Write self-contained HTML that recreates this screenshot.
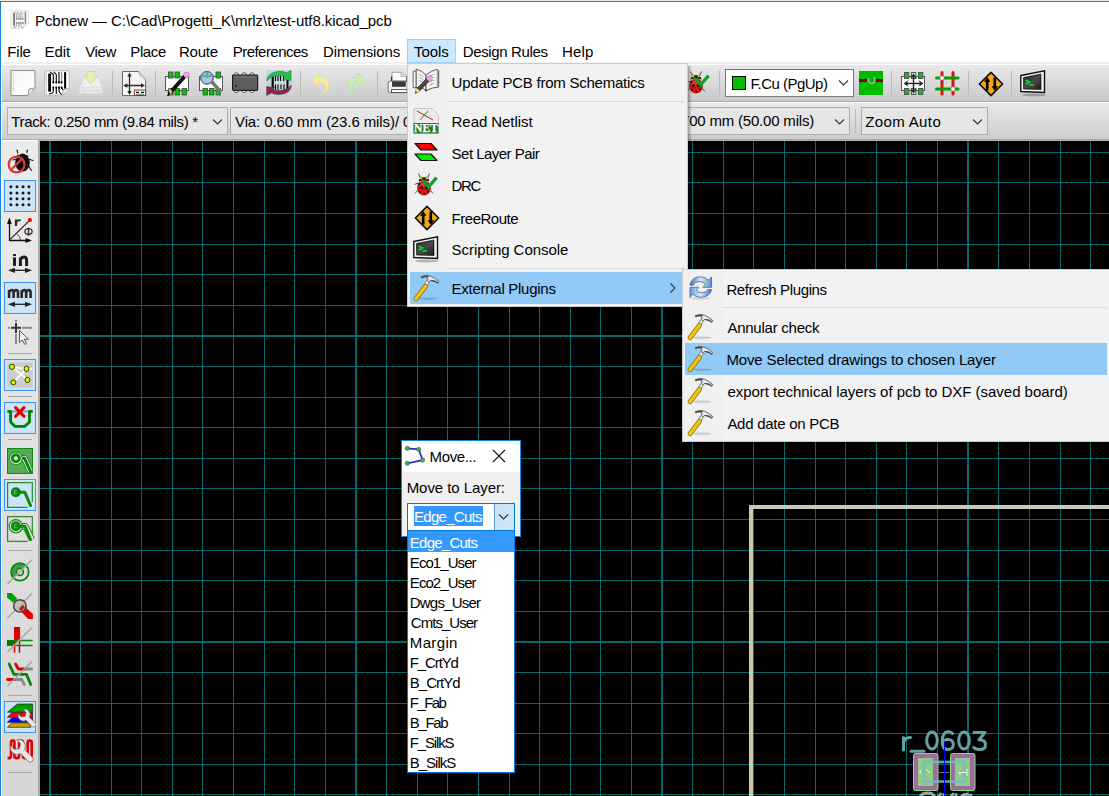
<!DOCTYPE html>
<html><head><meta charset="utf-8"><style>
html,body{margin:0;padding:0;}
body{width:1109px;height:796px;position:relative;overflow:hidden;background:#fff;font-family:"Liberation Sans", sans-serif;}
.t{position:absolute;white-space:pre;line-height:17px;font-family:"Liberation Sans", sans-serif;}
svg{display:block}
</style></head><body>
<svg style="position:absolute;left:0;top:0" width="1109" height="796" shape-rendering="crispEdges"><rect x="40" y="141" width="1069" height="655" fill="#000"/><rect x="49" y="141" width="2" height="655" fill="#006868"/><rect x="80" y="141" width="1" height="655" fill="#006868"/><rect x="111" y="141" width="1" height="655" fill="#006868"/><rect x="141" y="141" width="1" height="655" fill="#006868"/><rect x="172" y="141" width="1" height="655" fill="#006868"/><rect x="202" y="141" width="1" height="655" fill="#006868"/><rect x="233" y="141" width="1" height="655" fill="#006868"/><rect x="264" y="141" width="1" height="655" fill="#006868"/><rect x="294" y="141" width="1" height="655" fill="#006868"/><rect x="325" y="141" width="1" height="655" fill="#006868"/><rect x="355" y="141" width="2" height="655" fill="#006868"/><rect x="386" y="141" width="1" height="655" fill="#006868"/><rect x="417" y="141" width="1" height="655" fill="#006868"/><rect x="447" y="141" width="1" height="655" fill="#006868"/><rect x="478" y="141" width="1" height="655" fill="#006868"/><rect x="509" y="141" width="1" height="655" fill="#006868"/><rect x="539" y="141" width="1" height="655" fill="#006868"/><rect x="570" y="141" width="1" height="655" fill="#006868"/><rect x="600" y="141" width="1" height="655" fill="#006868"/><rect x="631" y="141" width="1" height="655" fill="#006868"/><rect x="661" y="141" width="2" height="655" fill="#006868"/><rect x="692" y="141" width="1" height="655" fill="#006868"/><rect x="723" y="141" width="1" height="655" fill="#006868"/><rect x="753" y="141" width="1" height="655" fill="#006868"/><rect x="784" y="141" width="1" height="655" fill="#006868"/><rect x="815" y="141" width="1" height="655" fill="#006868"/><rect x="845" y="141" width="1" height="655" fill="#006868"/><rect x="876" y="141" width="1" height="655" fill="#006868"/><rect x="906" y="141" width="1" height="655" fill="#006868"/><rect x="937" y="141" width="1" height="655" fill="#006868"/><rect x="967" y="141" width="2" height="655" fill="#006868"/><rect x="998" y="141" width="1" height="655" fill="#006868"/><rect x="1029" y="141" width="1" height="655" fill="#006868"/><rect x="1060" y="141" width="1" height="655" fill="#006868"/><rect x="1090" y="141" width="1" height="655" fill="#006868"/><rect x="40" y="152" width="1069" height="1" fill="#006868"/><rect x="40" y="182" width="1069" height="1" fill="#006868"/><rect x="40" y="213" width="1069" height="1" fill="#006868"/><rect x="40" y="244" width="1069" height="1" fill="#006868"/><rect x="40" y="274" width="1069" height="1" fill="#006868"/><rect x="40" y="305" width="1069" height="1" fill="#006868"/><rect x="40" y="335" width="1069" height="2" fill="#006868"/><rect x="40" y="366" width="1069" height="1" fill="#006868"/><rect x="40" y="397" width="1069" height="1" fill="#006868"/><rect x="40" y="427" width="1069" height="1" fill="#006868"/><rect x="40" y="458" width="1069" height="1" fill="#006868"/><rect x="40" y="488" width="1069" height="1" fill="#006868"/><rect x="40" y="519" width="1069" height="1" fill="#006868"/><rect x="40" y="550" width="1069" height="1" fill="#006868"/><rect x="40" y="580" width="1069" height="1" fill="#006868"/><rect x="40" y="611" width="1069" height="1" fill="#006868"/><rect x="40" y="641" width="1069" height="2" fill="#006868"/><rect x="40" y="672" width="1069" height="1" fill="#006868"/><rect x="40" y="703" width="1069" height="1" fill="#006868"/><rect x="40" y="733" width="1069" height="1" fill="#006868"/><rect x="40" y="764" width="1069" height="1" fill="#006868"/><rect x="40" y="794" width="1069" height="1" fill="#006868"/><path d="M49 152h2v1h-2zM49 182h2v1h-2zM49 213h2v1h-2zM49 244h2v1h-2zM49 274h2v1h-2zM49 305h2v1h-2zM49 335h2v2h-2zM49 366h2v1h-2zM49 397h2v1h-2zM49 427h2v1h-2zM49 458h2v1h-2zM49 488h2v1h-2zM49 519h2v1h-2zM49 550h2v1h-2zM49 580h2v1h-2zM49 611h2v1h-2zM49 641h2v2h-2zM49 672h2v1h-2zM49 703h2v1h-2zM49 733h2v1h-2zM49 764h2v1h-2zM49 794h2v1h-2zM80 152h1v1h-1zM80 182h1v1h-1zM80 213h1v1h-1zM80 244h1v1h-1zM80 274h1v1h-1zM80 305h1v1h-1zM80 335h1v2h-1zM80 366h1v1h-1zM80 397h1v1h-1zM80 427h1v1h-1zM80 458h1v1h-1zM80 488h1v1h-1zM80 519h1v1h-1zM80 550h1v1h-1zM80 580h1v1h-1zM80 611h1v1h-1zM80 641h1v2h-1zM80 672h1v1h-1zM80 703h1v1h-1zM80 733h1v1h-1zM80 764h1v1h-1zM80 794h1v1h-1zM111 152h1v1h-1zM111 182h1v1h-1zM111 213h1v1h-1zM111 244h1v1h-1zM111 274h1v1h-1zM111 305h1v1h-1zM111 335h1v2h-1zM111 366h1v1h-1zM111 397h1v1h-1zM111 427h1v1h-1zM111 458h1v1h-1zM111 488h1v1h-1zM111 519h1v1h-1zM111 550h1v1h-1zM111 580h1v1h-1zM111 611h1v1h-1zM111 641h1v2h-1zM111 672h1v1h-1zM111 703h1v1h-1zM111 733h1v1h-1zM111 764h1v1h-1zM111 794h1v1h-1zM141 152h1v1h-1zM141 182h1v1h-1zM141 213h1v1h-1zM141 244h1v1h-1zM141 274h1v1h-1zM141 305h1v1h-1zM141 335h1v2h-1zM141 366h1v1h-1zM141 397h1v1h-1zM141 427h1v1h-1zM141 458h1v1h-1zM141 488h1v1h-1zM141 519h1v1h-1zM141 550h1v1h-1zM141 580h1v1h-1zM141 611h1v1h-1zM141 641h1v2h-1zM141 672h1v1h-1zM141 703h1v1h-1zM141 733h1v1h-1zM141 764h1v1h-1zM141 794h1v1h-1zM172 152h1v1h-1zM172 182h1v1h-1zM172 213h1v1h-1zM172 244h1v1h-1zM172 274h1v1h-1zM172 305h1v1h-1zM172 335h1v2h-1zM172 366h1v1h-1zM172 397h1v1h-1zM172 427h1v1h-1zM172 458h1v1h-1zM172 488h1v1h-1zM172 519h1v1h-1zM172 550h1v1h-1zM172 580h1v1h-1zM172 611h1v1h-1zM172 641h1v2h-1zM172 672h1v1h-1zM172 703h1v1h-1zM172 733h1v1h-1zM172 764h1v1h-1zM172 794h1v1h-1zM202 152h1v1h-1zM202 182h1v1h-1zM202 213h1v1h-1zM202 244h1v1h-1zM202 274h1v1h-1zM202 305h1v1h-1zM202 335h1v2h-1zM202 366h1v1h-1zM202 397h1v1h-1zM202 427h1v1h-1zM202 458h1v1h-1zM202 488h1v1h-1zM202 519h1v1h-1zM202 550h1v1h-1zM202 580h1v1h-1zM202 611h1v1h-1zM202 641h1v2h-1zM202 672h1v1h-1zM202 703h1v1h-1zM202 733h1v1h-1zM202 764h1v1h-1zM202 794h1v1h-1zM233 152h1v1h-1zM233 182h1v1h-1zM233 213h1v1h-1zM233 244h1v1h-1zM233 274h1v1h-1zM233 305h1v1h-1zM233 335h1v2h-1zM233 366h1v1h-1zM233 397h1v1h-1zM233 427h1v1h-1zM233 458h1v1h-1zM233 488h1v1h-1zM233 519h1v1h-1zM233 550h1v1h-1zM233 580h1v1h-1zM233 611h1v1h-1zM233 641h1v2h-1zM233 672h1v1h-1zM233 703h1v1h-1zM233 733h1v1h-1zM233 764h1v1h-1zM233 794h1v1h-1zM264 152h1v1h-1zM264 182h1v1h-1zM264 213h1v1h-1zM264 244h1v1h-1zM264 274h1v1h-1zM264 305h1v1h-1zM264 335h1v2h-1zM264 366h1v1h-1zM264 397h1v1h-1zM264 427h1v1h-1zM264 458h1v1h-1zM264 488h1v1h-1zM264 519h1v1h-1zM264 550h1v1h-1zM264 580h1v1h-1zM264 611h1v1h-1zM264 641h1v2h-1zM264 672h1v1h-1zM264 703h1v1h-1zM264 733h1v1h-1zM264 764h1v1h-1zM264 794h1v1h-1zM294 152h1v1h-1zM294 182h1v1h-1zM294 213h1v1h-1zM294 244h1v1h-1zM294 274h1v1h-1zM294 305h1v1h-1zM294 335h1v2h-1zM294 366h1v1h-1zM294 397h1v1h-1zM294 427h1v1h-1zM294 458h1v1h-1zM294 488h1v1h-1zM294 519h1v1h-1zM294 550h1v1h-1zM294 580h1v1h-1zM294 611h1v1h-1zM294 641h1v2h-1zM294 672h1v1h-1zM294 703h1v1h-1zM294 733h1v1h-1zM294 764h1v1h-1zM294 794h1v1h-1zM325 152h1v1h-1zM325 182h1v1h-1zM325 213h1v1h-1zM325 244h1v1h-1zM325 274h1v1h-1zM325 305h1v1h-1zM325 335h1v2h-1zM325 366h1v1h-1zM325 397h1v1h-1zM325 427h1v1h-1zM325 458h1v1h-1zM325 488h1v1h-1zM325 519h1v1h-1zM325 550h1v1h-1zM325 580h1v1h-1zM325 611h1v1h-1zM325 641h1v2h-1zM325 672h1v1h-1zM325 703h1v1h-1zM325 733h1v1h-1zM325 764h1v1h-1zM325 794h1v1h-1zM355 152h2v1h-2zM355 182h2v1h-2zM355 213h2v1h-2zM355 244h2v1h-2zM355 274h2v1h-2zM355 305h2v1h-2zM355 335h2v2h-2zM355 366h2v1h-2zM355 397h2v1h-2zM355 427h2v1h-2zM355 458h2v1h-2zM355 488h2v1h-2zM355 519h2v1h-2zM355 550h2v1h-2zM355 580h2v1h-2zM355 611h2v1h-2zM355 641h2v2h-2zM355 672h2v1h-2zM355 703h2v1h-2zM355 733h2v1h-2zM355 764h2v1h-2zM355 794h2v1h-2zM386 152h1v1h-1zM386 182h1v1h-1zM386 213h1v1h-1zM386 244h1v1h-1zM386 274h1v1h-1zM386 305h1v1h-1zM386 335h1v2h-1zM386 366h1v1h-1zM386 397h1v1h-1zM386 427h1v1h-1zM386 458h1v1h-1zM386 488h1v1h-1zM386 519h1v1h-1zM386 550h1v1h-1zM386 580h1v1h-1zM386 611h1v1h-1zM386 641h1v2h-1zM386 672h1v1h-1zM386 703h1v1h-1zM386 733h1v1h-1zM386 764h1v1h-1zM386 794h1v1h-1zM417 152h1v1h-1zM417 182h1v1h-1zM417 213h1v1h-1zM417 244h1v1h-1zM417 274h1v1h-1zM417 305h1v1h-1zM417 335h1v2h-1zM417 366h1v1h-1zM417 397h1v1h-1zM417 427h1v1h-1zM417 458h1v1h-1zM417 488h1v1h-1zM417 519h1v1h-1zM417 550h1v1h-1zM417 580h1v1h-1zM417 611h1v1h-1zM417 641h1v2h-1zM417 672h1v1h-1zM417 703h1v1h-1zM417 733h1v1h-1zM417 764h1v1h-1zM417 794h1v1h-1zM447 152h1v1h-1zM447 182h1v1h-1zM447 213h1v1h-1zM447 244h1v1h-1zM447 274h1v1h-1zM447 305h1v1h-1zM447 335h1v2h-1zM447 366h1v1h-1zM447 397h1v1h-1zM447 427h1v1h-1zM447 458h1v1h-1zM447 488h1v1h-1zM447 519h1v1h-1zM447 550h1v1h-1zM447 580h1v1h-1zM447 611h1v1h-1zM447 641h1v2h-1zM447 672h1v1h-1zM447 703h1v1h-1zM447 733h1v1h-1zM447 764h1v1h-1zM447 794h1v1h-1zM478 152h1v1h-1zM478 182h1v1h-1zM478 213h1v1h-1zM478 244h1v1h-1zM478 274h1v1h-1zM478 305h1v1h-1zM478 335h1v2h-1zM478 366h1v1h-1zM478 397h1v1h-1zM478 427h1v1h-1zM478 458h1v1h-1zM478 488h1v1h-1zM478 519h1v1h-1zM478 550h1v1h-1zM478 580h1v1h-1zM478 611h1v1h-1zM478 641h1v2h-1zM478 672h1v1h-1zM478 703h1v1h-1zM478 733h1v1h-1zM478 764h1v1h-1zM478 794h1v1h-1zM509 152h1v1h-1zM509 182h1v1h-1zM509 213h1v1h-1zM509 244h1v1h-1zM509 274h1v1h-1zM509 305h1v1h-1zM509 335h1v2h-1zM509 366h1v1h-1zM509 397h1v1h-1zM509 427h1v1h-1zM509 458h1v1h-1zM509 488h1v1h-1zM509 519h1v1h-1zM509 550h1v1h-1zM509 580h1v1h-1zM509 611h1v1h-1zM509 641h1v2h-1zM509 672h1v1h-1zM509 703h1v1h-1zM509 733h1v1h-1zM509 764h1v1h-1zM509 794h1v1h-1zM539 152h1v1h-1zM539 182h1v1h-1zM539 213h1v1h-1zM539 244h1v1h-1zM539 274h1v1h-1zM539 305h1v1h-1zM539 335h1v2h-1zM539 366h1v1h-1zM539 397h1v1h-1zM539 427h1v1h-1zM539 458h1v1h-1zM539 488h1v1h-1zM539 519h1v1h-1zM539 550h1v1h-1zM539 580h1v1h-1zM539 611h1v1h-1zM539 641h1v2h-1zM539 672h1v1h-1zM539 703h1v1h-1zM539 733h1v1h-1zM539 764h1v1h-1zM539 794h1v1h-1zM570 152h1v1h-1zM570 182h1v1h-1zM570 213h1v1h-1zM570 244h1v1h-1zM570 274h1v1h-1zM570 305h1v1h-1zM570 335h1v2h-1zM570 366h1v1h-1zM570 397h1v1h-1zM570 427h1v1h-1zM570 458h1v1h-1zM570 488h1v1h-1zM570 519h1v1h-1zM570 550h1v1h-1zM570 580h1v1h-1zM570 611h1v1h-1zM570 641h1v2h-1zM570 672h1v1h-1zM570 703h1v1h-1zM570 733h1v1h-1zM570 764h1v1h-1zM570 794h1v1h-1zM600 152h1v1h-1zM600 182h1v1h-1zM600 213h1v1h-1zM600 244h1v1h-1zM600 274h1v1h-1zM600 305h1v1h-1zM600 335h1v2h-1zM600 366h1v1h-1zM600 397h1v1h-1zM600 427h1v1h-1zM600 458h1v1h-1zM600 488h1v1h-1zM600 519h1v1h-1zM600 550h1v1h-1zM600 580h1v1h-1zM600 611h1v1h-1zM600 641h1v2h-1zM600 672h1v1h-1zM600 703h1v1h-1zM600 733h1v1h-1zM600 764h1v1h-1zM600 794h1v1h-1zM631 152h1v1h-1zM631 182h1v1h-1zM631 213h1v1h-1zM631 244h1v1h-1zM631 274h1v1h-1zM631 305h1v1h-1zM631 335h1v2h-1zM631 366h1v1h-1zM631 397h1v1h-1zM631 427h1v1h-1zM631 458h1v1h-1zM631 488h1v1h-1zM631 519h1v1h-1zM631 550h1v1h-1zM631 580h1v1h-1zM631 611h1v1h-1zM631 641h1v2h-1zM631 672h1v1h-1zM631 703h1v1h-1zM631 733h1v1h-1zM631 764h1v1h-1zM631 794h1v1h-1zM661 152h2v1h-2zM661 182h2v1h-2zM661 213h2v1h-2zM661 244h2v1h-2zM661 274h2v1h-2zM661 305h2v1h-2zM661 335h2v2h-2zM661 366h2v1h-2zM661 397h2v1h-2zM661 427h2v1h-2zM661 458h2v1h-2zM661 488h2v1h-2zM661 519h2v1h-2zM661 550h2v1h-2zM661 580h2v1h-2zM661 611h2v1h-2zM661 641h2v2h-2zM661 672h2v1h-2zM661 703h2v1h-2zM661 733h2v1h-2zM661 764h2v1h-2zM661 794h2v1h-2zM692 152h1v1h-1zM692 182h1v1h-1zM692 213h1v1h-1zM692 244h1v1h-1zM692 274h1v1h-1zM692 305h1v1h-1zM692 335h1v2h-1zM692 366h1v1h-1zM692 397h1v1h-1zM692 427h1v1h-1zM692 458h1v1h-1zM692 488h1v1h-1zM692 519h1v1h-1zM692 550h1v1h-1zM692 580h1v1h-1zM692 611h1v1h-1zM692 641h1v2h-1zM692 672h1v1h-1zM692 703h1v1h-1zM692 733h1v1h-1zM692 764h1v1h-1zM692 794h1v1h-1zM723 152h1v1h-1zM723 182h1v1h-1zM723 213h1v1h-1zM723 244h1v1h-1zM723 274h1v1h-1zM723 305h1v1h-1zM723 335h1v2h-1zM723 366h1v1h-1zM723 397h1v1h-1zM723 427h1v1h-1zM723 458h1v1h-1zM723 488h1v1h-1zM723 519h1v1h-1zM723 550h1v1h-1zM723 580h1v1h-1zM723 611h1v1h-1zM723 641h1v2h-1zM723 672h1v1h-1zM723 703h1v1h-1zM723 733h1v1h-1zM723 764h1v1h-1zM723 794h1v1h-1zM753 152h1v1h-1zM753 182h1v1h-1zM753 213h1v1h-1zM753 244h1v1h-1zM753 274h1v1h-1zM753 305h1v1h-1zM753 335h1v2h-1zM753 366h1v1h-1zM753 397h1v1h-1zM753 427h1v1h-1zM753 458h1v1h-1zM753 488h1v1h-1zM753 519h1v1h-1zM753 550h1v1h-1zM753 580h1v1h-1zM753 611h1v1h-1zM753 641h1v2h-1zM753 672h1v1h-1zM753 703h1v1h-1zM753 733h1v1h-1zM753 764h1v1h-1zM753 794h1v1h-1zM784 152h1v1h-1zM784 182h1v1h-1zM784 213h1v1h-1zM784 244h1v1h-1zM784 274h1v1h-1zM784 305h1v1h-1zM784 335h1v2h-1zM784 366h1v1h-1zM784 397h1v1h-1zM784 427h1v1h-1zM784 458h1v1h-1zM784 488h1v1h-1zM784 519h1v1h-1zM784 550h1v1h-1zM784 580h1v1h-1zM784 611h1v1h-1zM784 641h1v2h-1zM784 672h1v1h-1zM784 703h1v1h-1zM784 733h1v1h-1zM784 764h1v1h-1zM784 794h1v1h-1zM815 152h1v1h-1zM815 182h1v1h-1zM815 213h1v1h-1zM815 244h1v1h-1zM815 274h1v1h-1zM815 305h1v1h-1zM815 335h1v2h-1zM815 366h1v1h-1zM815 397h1v1h-1zM815 427h1v1h-1zM815 458h1v1h-1zM815 488h1v1h-1zM815 519h1v1h-1zM815 550h1v1h-1zM815 580h1v1h-1zM815 611h1v1h-1zM815 641h1v2h-1zM815 672h1v1h-1zM815 703h1v1h-1zM815 733h1v1h-1zM815 764h1v1h-1zM815 794h1v1h-1zM845 152h1v1h-1zM845 182h1v1h-1zM845 213h1v1h-1zM845 244h1v1h-1zM845 274h1v1h-1zM845 305h1v1h-1zM845 335h1v2h-1zM845 366h1v1h-1zM845 397h1v1h-1zM845 427h1v1h-1zM845 458h1v1h-1zM845 488h1v1h-1zM845 519h1v1h-1zM845 550h1v1h-1zM845 580h1v1h-1zM845 611h1v1h-1zM845 641h1v2h-1zM845 672h1v1h-1zM845 703h1v1h-1zM845 733h1v1h-1zM845 764h1v1h-1zM845 794h1v1h-1zM876 152h1v1h-1zM876 182h1v1h-1zM876 213h1v1h-1zM876 244h1v1h-1zM876 274h1v1h-1zM876 305h1v1h-1zM876 335h1v2h-1zM876 366h1v1h-1zM876 397h1v1h-1zM876 427h1v1h-1zM876 458h1v1h-1zM876 488h1v1h-1zM876 519h1v1h-1zM876 550h1v1h-1zM876 580h1v1h-1zM876 611h1v1h-1zM876 641h1v2h-1zM876 672h1v1h-1zM876 703h1v1h-1zM876 733h1v1h-1zM876 764h1v1h-1zM876 794h1v1h-1zM906 152h1v1h-1zM906 182h1v1h-1zM906 213h1v1h-1zM906 244h1v1h-1zM906 274h1v1h-1zM906 305h1v1h-1zM906 335h1v2h-1zM906 366h1v1h-1zM906 397h1v1h-1zM906 427h1v1h-1zM906 458h1v1h-1zM906 488h1v1h-1zM906 519h1v1h-1zM906 550h1v1h-1zM906 580h1v1h-1zM906 611h1v1h-1zM906 641h1v2h-1zM906 672h1v1h-1zM906 703h1v1h-1zM906 733h1v1h-1zM906 764h1v1h-1zM906 794h1v1h-1zM937 152h1v1h-1zM937 182h1v1h-1zM937 213h1v1h-1zM937 244h1v1h-1zM937 274h1v1h-1zM937 305h1v1h-1zM937 335h1v2h-1zM937 366h1v1h-1zM937 397h1v1h-1zM937 427h1v1h-1zM937 458h1v1h-1zM937 488h1v1h-1zM937 519h1v1h-1zM937 550h1v1h-1zM937 580h1v1h-1zM937 611h1v1h-1zM937 641h1v2h-1zM937 672h1v1h-1zM937 703h1v1h-1zM937 733h1v1h-1zM937 764h1v1h-1zM937 794h1v1h-1zM967 152h2v1h-2zM967 182h2v1h-2zM967 213h2v1h-2zM967 244h2v1h-2zM967 274h2v1h-2zM967 305h2v1h-2zM967 335h2v2h-2zM967 366h2v1h-2zM967 397h2v1h-2zM967 427h2v1h-2zM967 458h2v1h-2zM967 488h2v1h-2zM967 519h2v1h-2zM967 550h2v1h-2zM967 580h2v1h-2zM967 611h2v1h-2zM967 641h2v2h-2zM967 672h2v1h-2zM967 703h2v1h-2zM967 733h2v1h-2zM967 764h2v1h-2zM967 794h2v1h-2zM998 152h1v1h-1zM998 182h1v1h-1zM998 213h1v1h-1zM998 244h1v1h-1zM998 274h1v1h-1zM998 305h1v1h-1zM998 335h1v2h-1zM998 366h1v1h-1zM998 397h1v1h-1zM998 427h1v1h-1zM998 458h1v1h-1zM998 488h1v1h-1zM998 519h1v1h-1zM998 550h1v1h-1zM998 580h1v1h-1zM998 611h1v1h-1zM998 641h1v2h-1zM998 672h1v1h-1zM998 703h1v1h-1zM998 733h1v1h-1zM998 764h1v1h-1zM998 794h1v1h-1zM1029 152h1v1h-1zM1029 182h1v1h-1zM1029 213h1v1h-1zM1029 244h1v1h-1zM1029 274h1v1h-1zM1029 305h1v1h-1zM1029 335h1v2h-1zM1029 366h1v1h-1zM1029 397h1v1h-1zM1029 427h1v1h-1zM1029 458h1v1h-1zM1029 488h1v1h-1zM1029 519h1v1h-1zM1029 550h1v1h-1zM1029 580h1v1h-1zM1029 611h1v1h-1zM1029 641h1v2h-1zM1029 672h1v1h-1zM1029 703h1v1h-1zM1029 733h1v1h-1zM1029 764h1v1h-1zM1029 794h1v1h-1zM1060 152h1v1h-1zM1060 182h1v1h-1zM1060 213h1v1h-1zM1060 244h1v1h-1zM1060 274h1v1h-1zM1060 305h1v1h-1zM1060 335h1v2h-1zM1060 366h1v1h-1zM1060 397h1v1h-1zM1060 427h1v1h-1zM1060 458h1v1h-1zM1060 488h1v1h-1zM1060 519h1v1h-1zM1060 550h1v1h-1zM1060 580h1v1h-1zM1060 611h1v1h-1zM1060 641h1v2h-1zM1060 672h1v1h-1zM1060 703h1v1h-1zM1060 733h1v1h-1zM1060 764h1v1h-1zM1060 794h1v1h-1zM1090 152h1v1h-1zM1090 182h1v1h-1zM1090 213h1v1h-1zM1090 244h1v1h-1zM1090 274h1v1h-1zM1090 305h1v1h-1zM1090 335h1v2h-1zM1090 366h1v1h-1zM1090 397h1v1h-1zM1090 427h1v1h-1zM1090 458h1v1h-1zM1090 488h1v1h-1zM1090 519h1v1h-1zM1090 550h1v1h-1zM1090 580h1v1h-1zM1090 611h1v1h-1zM1090 641h1v2h-1zM1090 672h1v1h-1zM1090 703h1v1h-1zM1090 733h1v1h-1zM1090 764h1v1h-1zM1090 794h1v1h-1z" fill="#007676"/></svg>
<div style="position:absolute;left:0px;top:0px;width:1109px;height:1px;background:#efe6dc"></div>
<div style="position:absolute;left:0px;top:1px;width:1109px;height:1px;background:#1a7fd6"></div>
<div style="position:absolute;left:0px;top:1px;width:1px;height:795px;background:#1a7fd6"></div>
<div style="position:absolute;left:1px;top:2px;width:1108px;height:60px;background:#fff"></div>
<div style="position:absolute;left:1px;top:62px;width:1108px;height:2px;background:#f0f0f0"></div>
<div style="position:absolute;left:1px;top:64px;width:1108px;height:1px;background:#fdfdfd"></div>
<div style="position:absolute;left:1px;top:65px;width:1108px;height:36px;background:linear-gradient(#e9e9e9,#cacaca)"></div>
<div style="position:absolute;left:1px;top:101px;width:1108px;height:1px;background:#a9a9a9"></div>
<div style="position:absolute;left:1px;top:102px;width:1108px;height:1px;background:#fff"></div>
<div style="position:absolute;left:1px;top:103px;width:1108px;height:36px;background:linear-gradient(#e9e9e9,#cdcdcd)"></div>
<div style="position:absolute;left:1px;top:139px;width:1108px;height:1px;background:#a9a9a9"></div>
<div style="position:absolute;left:38px;top:140px;width:1071px;height:1px;background:#b4b4b4"></div>
<div style="position:absolute;left:1px;top:140px;width:37px;height:1px;background:#fff"></div>
<div style="position:absolute;left:1px;top:62px;width:1px;height:734px;background:#fbfbfb"></div>
<div style="position:absolute;left:2px;top:141px;width:36px;height:655px;background:linear-gradient(#ebebeb,#d6d6d6)"></div>
<div style="position:absolute;left:38px;top:140px;width:2px;height:656px;background:#ababab"></div>
<div class="t" style="left:35.0px;top:12.3px;font-size:15px;color:#000;letter-spacing:-0.066px;">Pcbnew — C:\Cad\Progetti_K\mrlz\test-utf8.kicad_pcb</div>
<div style="position:absolute;left:407px;top:39px;width:49px;height:24px;background:#cce8ff;box-sizing:border-box;border:1px solid #99d1ff"></div>
<div class="t" style="left:7.3px;top:43.3px;font-size:15px;color:#000;letter-spacing:-0.167px;">File</div>
<div class="t" style="left:44.6px;top:43.3px;font-size:15px;color:#000;letter-spacing:-0.067px;">Edit</div>
<div class="t" style="left:85.3px;top:43.3px;font-size:15px;color:#000;letter-spacing:-0.433px;">View</div>
<div class="t" style="left:130.3px;top:43.3px;font-size:15px;color:#000;letter-spacing:-0.400px;">Place</div>
<div class="t" style="left:179.0px;top:43.3px;font-size:15px;color:#000;letter-spacing:-0.250px;">Route</div>
<div class="t" style="left:232.7px;top:43.3px;font-size:15px;color:#000;letter-spacing:-0.530px;">Preferences</div>
<div class="t" style="left:323.0px;top:43.3px;font-size:15px;color:#000;letter-spacing:-0.133px;">Dimensions</div>
<div class="t" style="left:414.0px;top:43.3px;font-size:15px;color:#000;letter-spacing:-0.050px;">Tools</div>
<div class="t" style="left:462.7px;top:43.3px;font-size:15px;color:#000;letter-spacing:-0.355px;">Design Rules</div>
<div class="t" style="left:562.0px;top:43.3px;font-size:15px;color:#000;letter-spacing:0.200px;">Help</div>
<div style="position:absolute;left:112px;top:71px;width:1px;height:24px;background:#b9b9b9"></div>
<div style="position:absolute;left:155px;top:71px;width:1px;height:24px;background:#b9b9b9"></div>
<div style="position:absolute;left:300px;top:71px;width:1px;height:24px;background:#b9b9b9"></div>
<div style="position:absolute;left:377px;top:71px;width:1px;height:24px;background:#b9b9b9"></div>
<div style="position:absolute;left:719px;top:71px;width:1px;height:24px;background:#b9b9b9"></div>
<div style="position:absolute;left:891px;top:71px;width:1px;height:24px;background:#b9b9b9"></div>
<div style="position:absolute;left:968px;top:71px;width:1px;height:24px;background:#b9b9b9"></div>
<div style="position:absolute;left:1011px;top:71px;width:1px;height:24px;background:#b9b9b9"></div>
<div style="position:absolute;left:725px;top:69px;width:129px;height:28px;background:#fff;box-sizing:border-box;border:1px solid #7a7a7a"></div>
<div style="position:absolute;left:732px;top:76px;width:14px;height:14px;background:#00c000;box-sizing:border-box;border:1px solid #000"></div>
<div class="t" style="left:750.6px;top:74.6px;font-size:15px;color:#000;letter-spacing:-0.520px;">F.Cu (PgUp)</div>
<svg style="position:absolute;left:838px;top:79px" width="12" height="8"><path d="M1 1.5 L5.5 6 L10 1.5" fill="none" stroke="#333" stroke-width="1.1"/></svg>
<div style="position:absolute;left:7px;top:107px;width:221px;height:28px;background:#e5e5e5;box-sizing:border-box;border:1px solid #adadad"></div>
<div class="t" style="left:11.2px;top:112.7px;font-size:15px;color:#000;letter-spacing:-0.329px;">Track: 0.250 mm (9.84 mils) *</div>
<svg style="position:absolute;left:212px;top:118px" width="12" height="8"><path d="M1 1.5 L5.5 6 L10 1.5" fill="none" stroke="#333" stroke-width="1.1"/></svg>
<div style="position:absolute;left:230px;top:107px;width:240px;height:28px;background:#e5e5e5;box-sizing:border-box;border:1px solid #adadad"></div>
<div class="t" style="left:235.0px;top:112.7px;font-size:15px;color:#000;letter-spacing:-0.100px;">Via: 0.60 mm (23.6 mils)/ 0.40 mm (15.7 mils)</div>
<div style="position:absolute;left:560px;top:107px;width:290px;height:28px;background:#e5e5e5;box-sizing:border-box;border:1px solid #adadad"></div>
<svg style="position:absolute;left:834px;top:118px" width="12" height="8"><path d="M1 1.5 L5.5 6 L10 1.5" fill="none" stroke="#333" stroke-width="1.1"/></svg>
<div class="t" style="right:295px;top:112.3px;font-size:15px;letter-spacing:-0.2px">Grid: 1.2700 mm (50.00 mils)</div>
<div style="position:absolute;left:855px;top:109px;width:1px;height:24px;background:#b9b9b9"></div>
<div style="position:absolute;left:861px;top:107px;width:127px;height:28px;background:#e5e5e5;box-sizing:border-box;border:1px solid #adadad"></div>
<div class="t" style="left:865.2px;top:112.7px;font-size:15px;color:#000;letter-spacing:0.375px;">Zoom Auto</div>
<svg style="position:absolute;left:972px;top:118px" width="12" height="8"><path d="M1 1.5 L5.5 6 L10 1.5" fill="none" stroke="#333" stroke-width="1.1"/></svg>
<svg style="position:absolute;left:10px;top:10px" width="19" height="19" viewBox="0 0 26 26"><g opacity="0.5"><path d="M0.8 0.8 H25.2 V18.4 L18 25.2 H0.8 Z" fill="#fdfdfd" stroke="#b4b4b4" stroke-width="1"/><path d="M25.2 18.4 L19.5 19.5 L18 25.2" fill="#e6e6e6" stroke="#aaa" stroke-width="0.8"/><path d="M2.5 3 V24" stroke="#9a9a9a" stroke-dasharray="0.9 1.3"/><rect x="4.2" y="3.6" width="2.8" height="18" fill="#000"/><g fill="none" stroke="#000" stroke-width="1.1"><path d="M6.2 1.8 L9.3 4.8 V12.5"/><path d="M9.6 1.8 L12.3 4.5 V12.5"/><path d="M15 2 V12.5"/><path d="M9.3 17.5 V21.5 Q9 23.5 5 24"/><path d="M12.3 17.5 V24"/><path d="M15 17.5 V21 Q15.5 23.5 18 24.5"/><path d="M17.6 17.5 L19 20"/></g><path d="M17.6 2 V12.5" stroke="#888" stroke-width="1.1"/><g fill="#000"><ellipse cx="9.3" cy="12.3" rx="0.9" ry="1.4"/><ellipse cx="12.3" cy="12.3" rx="0.9" ry="1.4"/><ellipse cx="15" cy="12.3" rx="0.9" ry="1.4"/><ellipse cx="17.6" cy="12.3" rx="0.9" ry="1.4"/><ellipse cx="9.3" cy="17.6" rx="0.9" ry="1.4"/><ellipse cx="12.3" cy="17.6" rx="0.9" ry="1.4"/><ellipse cx="15" cy="17.6" rx="0.9" ry="1.4"/><ellipse cx="17.6" cy="17.6" rx="0.9" ry="1.4"/></g><rect x="20.1" y="2.2" width="2" height="16.4" fill="#000"/></g></svg>
<svg style="position:absolute;left:10px;top:70px" width="26" height="26" viewBox="0 0 26 26"><defs><linearGradient id="gnew" x1="0" y1="0" x2="1" y2="1"><stop offset="0" stop-color="#f4f4f4"/><stop offset="1" stop-color="#ffffff"/></linearGradient></defs><path d="M1 0.5 H25 V18 L18 25.5 H1 Z" fill="url(#gnew)" stroke="#8e8e8e"/><path d="M24.5 18 L19 19 L18 25.5" fill="#e8e8e8" stroke="#999"/><path d="M3.5 3 V23" stroke="#aaa" stroke-dasharray="1 1.5"/></svg>
<svg style="position:absolute;left:44px;top:70px" width="26" height="26" viewBox="0 0 26 26"><path d="M0.8 0.8 H25.2 V18.4 L18 25.2 H0.8 Z" fill="#fdfdfd" stroke="#b4b4b4" stroke-width="1"/><path d="M25.2 18.4 L19.5 19.5 L18 25.2" fill="#e6e6e6" stroke="#aaa" stroke-width="0.8"/><path d="M2.5 3 V24" stroke="#9a9a9a" stroke-dasharray="0.9 1.3"/><rect x="4.2" y="3.6" width="2.8" height="18" fill="#000"/><g fill="none" stroke="#000" stroke-width="1.1"><path d="M6.2 1.8 L9.3 4.8 V12.5"/><path d="M9.6 1.8 L12.3 4.5 V12.5"/><path d="M15 2 V12.5"/><path d="M9.3 17.5 V21.5 Q9 23.5 5 24"/><path d="M12.3 17.5 V24"/><path d="M15 17.5 V21 Q15.5 23.5 18 24.5"/><path d="M17.6 17.5 L19 20"/></g><path d="M17.6 2 V12.5" stroke="#888" stroke-width="1.1"/><g fill="#000"><ellipse cx="9.3" cy="12.3" rx="0.9" ry="1.4"/><ellipse cx="12.3" cy="12.3" rx="0.9" ry="1.4"/><ellipse cx="15" cy="12.3" rx="0.9" ry="1.4"/><ellipse cx="17.6" cy="12.3" rx="0.9" ry="1.4"/><ellipse cx="9.3" cy="17.6" rx="0.9" ry="1.4"/><ellipse cx="12.3" cy="17.6" rx="0.9" ry="1.4"/><ellipse cx="15" cy="17.6" rx="0.9" ry="1.4"/><ellipse cx="17.6" cy="17.6" rx="0.9" ry="1.4"/></g><rect x="20.1" y="2.2" width="2" height="16.4" fill="#000"/></svg>
<svg style="position:absolute;left:74px;top:66px" width="32" height="32" viewBox="0 0 32 32"><path d="M10.3 10.3 H24 L28 21.2 V27.4 H5.8 V21.2 Z" fill="#f0f0f0" stroke="#dadada" stroke-width="0.8"/><rect x="5.8" y="21.2" width="22.2" height="6.2" fill="#e9e9e9" stroke="#dadada" stroke-width="0.8"/><path d="M8 24.7 H26" stroke="#d6d6d6" stroke-width="1.2" stroke-dasharray="5 1.5"/><path d="M13 5.5 H20.2 V10.6 H23.6 L16.8 17.8 L10.3 10.6 H13 Z" fill="#e6f0b4" stroke="#bcd898" stroke-width="0.8"/></svg>
<svg style="position:absolute;left:116px;top:66px" width="32" height="32" viewBox="0 0 32 32"><path d="M6.5 5.5 H22.7 L29.6 13.7 V29.5 H6.5 Z" fill="#f6f6f6" stroke="#6a6a6a" stroke-width="1"/><path d="M22.7 5.5 Q23 12 29.6 13.7" fill="#e2e2e2" stroke="#aaa" stroke-width="0.7"/><path d="M13.5 8.5 V27 M9 19.5 H27" stroke="#2a2a2a" stroke-width="1.3"/><path d="M13.5 6.5 L11.3 10.5 H15.7Z M13.5 29 L11.3 25 H15.7Z M7.3 19.5 L11.3 17.3 V21.7Z M29 19.5 L25 17.3 V21.7Z" fill="#2a2a2a"/><rect x="18.3" y="24" width="11.3" height="5.5" fill="#fafafa" stroke="#7a2a2a" stroke-width="0.9"/><path d="M20 26.3 H23 M25 26.3 H28" stroke="#111" stroke-width="1.3"/><path d="M20 28.3 H28" stroke="#2a6a2a" stroke-width="0.8"/></svg>
<svg style="position:absolute;left:164px;top:71px" width="26" height="26" viewBox="0 0 26 26"><rect x="1.5" y="5.5" width="23" height="14" fill="#fff" stroke="#555"/><rect x="4.5" y="1" width="4.5" height="6" fill="#00c800" stroke="#444" stroke-width="0.8"/><rect x="11" y="1" width="4.5" height="6" fill="#00c800" stroke="#444" stroke-width="0.8"/><rect x="4.5" y="17.5" width="4.5" height="6.5" fill="#00c800" stroke="#444" stroke-width="0.8"/><rect x="11" y="17.5" width="4.5" height="6.5" fill="#00c800" stroke="#444" stroke-width="0.8"/><rect x="18" y="17.5" width="4.5" height="6.5" fill="#00c800" stroke="#444" stroke-width="0.8"/><path d="M5 23 L21 5" stroke="#111" stroke-width="4" stroke-linecap="butt"/><path d="M6.5 24 L8 20 Q6 19 5 17.5 Z" fill="#f3eab0" stroke="#c8b040" stroke-width="0.8"/><path d="M3.5 25 L5.5 22.5" stroke="#111" stroke-width="1.5"/><circle cx="22.5" cy="3.8" r="2.8" fill="#e8a8e0" stroke="#b070a8" stroke-width="0.6"/></svg>
<svg style="position:absolute;left:198px;top:71px" width="26" height="26" viewBox="0 0 26 26"><rect x="1.5" y="5.5" width="23" height="14" fill="#fff" stroke="#555"/><rect x="18" y="1" width="4.5" height="6" fill="#00c800" stroke="#444" stroke-width="0.8"/><rect x="5" y="17.5" width="4.5" height="6.5" fill="#00c800" stroke="#444" stroke-width="0.8"/><rect x="11.5" y="17.5" width="4.5" height="6.5" fill="#00c800" stroke="#444" stroke-width="0.8"/><rect x="18" y="17.5" width="4.5" height="6.5" fill="#00c800" stroke="#444" stroke-width="0.8"/><path d="M14 11 L22 20" stroke="#777" stroke-width="3.5" stroke-linecap="round"/><circle cx="9" cy="6.8" r="6.3" fill="#a8c8e8" stroke="#555" stroke-width="1"/><path d="M4 5 H14 M9 1 V7" stroke="#50a080" stroke-width="2.5" opacity="0.7"/><circle cx="9" cy="6.8" r="6.3" fill="none" stroke="#4070b0" stroke-width="0.8"/></svg>
<svg style="position:absolute;left:228px;top:66px" width="32" height="32" viewBox="0 0 32 32"><path d="M6.3 10 V8.5 Q6.3 6.9 7.9 6.9 H8.8 Q10.399999999999999 6.9 10.399999999999999 8.5 V10" fill="#fafafa" stroke="#444" stroke-width="0.9"/><path d="M6.3 23 V25 Q6.3 26.5 7.9 26.5 H8.8 Q10.399999999999999 26.5 10.399999999999999 25 V23" fill="#fafafa" stroke="#444" stroke-width="0.9"/><path d="M14.2 10 V8.5 Q14.2 6.9 15.799999999999999 6.9 H16.7 Q18.299999999999997 6.9 18.299999999999997 8.5 V10" fill="#fafafa" stroke="#444" stroke-width="0.9"/><path d="M14.2 23 V25 Q14.2 26.5 15.799999999999999 26.5 H16.7 Q18.299999999999997 26.5 18.299999999999997 25 V23" fill="#fafafa" stroke="#444" stroke-width="0.9"/><path d="M22.1 10 V8.5 Q22.1 6.9 23.700000000000003 6.9 H24.6 Q26.200000000000003 6.9 26.200000000000003 8.5 V10" fill="#fafafa" stroke="#444" stroke-width="0.9"/><path d="M22.1 23 V25 Q22.1 26.5 23.700000000000003 26.5 H24.6 Q26.200000000000003 26.5 26.200000000000003 25 V23" fill="#fafafa" stroke="#444" stroke-width="0.9"/><rect x="4.6" y="9" width="25" height="15.4" rx="0.8" fill="#5e5e5e" stroke="#1e1e1e" stroke-width="1.2"/><rect x="5.8" y="10.2" width="22.6" height="2" fill="#6e6e6e"/><circle cx="7.9" cy="19.9" r="1" fill="#222"/></svg>
<svg style="position:absolute;left:264px;top:68px" width="32" height="32" viewBox="0 0 32 32"><rect x="2" y="2" width="26" height="25.7" fill="#c9d3da"/><g fill="#000"><rect x="7.6" y="6" width="2.2" height="17"/><rect x="22.5" y="7" width="2" height="14.5"/></g><g stroke="#000" stroke-width="1.1"><path d="M11.5 6.5 V13 M14 7 V13 M16.5 7 V13 M19.5 7 V13 M11.5 16.5 V22 M14 16.5 V22 M17 16.5 V21 M20 16.5 V22"/></g><path d="M2.6 12.5 Q4 4.5 14 3.4 Q19.5 3 22.3 4.8 L27 2.4 L27 12.6 L18.7 11.6 L21.8 9 Q17.5 7.3 12.5 7.8 Q6 8.7 3.6 12.5 Z" fill="#22c43a" stroke="#2a5aa0" stroke-width="0.5"/><path d="M27.5 17.5 Q26.5 26 16 26.6 Q10.5 27 7.6 25 L2.6 27.7 L2.6 18.4 L11 19.5 L7.8 21.7 Q12 22.8 17 22.3 Q24.5 21.3 26.6 17.5 Z" fill="#a0202e" stroke="#2a5aa0" stroke-width="0.5"/></svg>
<svg style="position:absolute;left:311px;top:72px" width="19" height="22" viewBox="0 0 19 22"><g><path d="M1 8 L8 1 V5 Q18 5 18 13 Q18 19 12 21 Q15 17 14 13 Q12 10 8 10 V15 Z" fill="#f4eaa6" stroke="#e8dc90" stroke-width="0.8"/></g></svg>
<svg style="position:absolute;left:347px;top:72px" width="19" height="22" viewBox="0 0 19 22"><g transform="translate(19,0) scale(-1,1)"><path d="M1 8 L8 1 V5 Q18 5 18 13 Q18 19 12 21 Q15 17 14 13 Q12 10 8 10 V15 Z" fill="#cbeeb8" stroke="#b8e0a0" stroke-width="0.8"/></g></svg>
<svg style="position:absolute;left:386px;top:70px" width="22" height="26" viewBox="0 0 22 26"><path d="M6 2.3 H15 L20.8 6.5 V11.1 H6 Z" fill="#fafafa" stroke="#8a8a8a" stroke-width="0.8"/><path d="M15 2.3 V6.5 H20.8" fill="#e0e0e0" stroke="#999" stroke-width="0.6"/><rect x="5" y="6.5" width="1.2" height="5" fill="#333"/><rect x="20.4" y="6.5" width="1.2" height="5" fill="#333"/><rect x="2.2" y="11.1" width="19" height="11.5" rx="2" fill="#f4f4f4" stroke="#666" stroke-width="0.9"/><rect x="6" y="11.4" width="13.8" height="5.4" fill="#3a3a3a"/><rect x="5.5" y="19.6" width="15.5" height="3" fill="#fff" stroke="#444" stroke-width="0.9"/></svg>
<svg style="position:absolute;left:682px;top:67px" width="32" height="32" viewBox="0 0 32 32"><g stroke="#444" stroke-width="0.9" fill="none"><path d="M8.5 4.5 L10.5 9.5 M19.5 4.5 L17.5 9.5 M4.5 15.5 L8 14 M5 24.5 L7.5 21.5 M23 24.5 L20.5 21.5"/></g><path d="M9 5.5 L12 8 M19 5.5 L16 8" stroke="#d08080" stroke-width="0.6"/><ellipse cx="14" cy="19" rx="7" ry="7.6" fill="#dd1010"/><ellipse cx="12" cy="16" rx="3" ry="2.5" fill="#ff5050" opacity="0.5"/><path d="M8.5 12.5 Q9 8.2 14 8.2 Q19 8.2 19.5 12.5 Q14 10.5 8.5 12.5Z" fill="#111"/><ellipse cx="11.3" cy="9.6" rx="1.3" ry="0.9" fill="#f0c800"/><ellipse cx="16.7" cy="9.6" rx="1.3" ry="0.9" fill="#f0c800"/><g fill="#111"><circle cx="9.2" cy="15" r="1.2"/><circle cx="11.5" cy="18.6" r="1.5"/><circle cx="16.5" cy="18.8" r="1.4"/><circle cx="10" cy="22.8" r="1.1"/><circle cx="14.5" cy="24.4" r="1"/><circle cx="18.2" cy="22.5" r="1.1"/></g><path d="M12.5 11 L18.6 17.8 L26.6 8.6" fill="none" stroke="#10a030" stroke-width="3.3"/></svg>
<svg style="position:absolute;left:859px;top:71px" width="24" height="24" viewBox="0 0 24 24"><rect x="0" y="0" width="24" height="24" fill="#00bb00"/><rect x="0" y="8" width="24" height="3" fill="#7a0000"/><circle cx="12.3" cy="9.5" r="4.2" fill="#00bb00"/><path d="M14.5 6.5 A3.3 3.3 0 1 1 10 7.2" fill="none" stroke="#d8b8c8" stroke-width="1.2"/></svg>
<svg style="position:absolute;left:898px;top:68px" width="32" height="32" viewBox="0 0 32 32"><rect x="3.5" y="8.5" width="23" height="14" fill="#fff" stroke="#555" stroke-width="1"/><rect x="6.5" y="4.5" width="4.3" height="6" fill="#00cc00" stroke="#555" stroke-width="1"/><rect x="6.5" y="20.5" width="4.3" height="6" fill="#00cc00" stroke="#555" stroke-width="1"/><rect x="13.5" y="4.5" width="4.3" height="6" fill="#fff" stroke="#555" stroke-width="1"/><rect x="13.5" y="20.5" width="4.3" height="6" fill="#fff" stroke="#555" stroke-width="1"/><rect x="20.5" y="4.5" width="4.3" height="6" fill="#00cc00" stroke="#555" stroke-width="1"/><rect x="20.5" y="20.5" width="4.3" height="6" fill="#00cc00" stroke="#555" stroke-width="1"/><path d="M15.5 7 V24 M7 15.5 H24" stroke="#222" stroke-width="1.4"/><path d="M15.5 5.5 L13 9.5 H18Z M15.5 25.5 L13 21.5 H18Z M5.5 15.5 L9.5 13 V18Z M25.5 15.5 L21.5 13 V18Z" fill="#222"/><path d="M12.5 10 L15.5 7 L18.5 10 M12.5 21 L15.5 24 L18.5 21 M10 12.5 L7 15.5 L10 18.5 M21 12.5 L24 15.5 L21 18.5" fill="none" stroke="#333" stroke-width="0.9"/><path d="M14 6.5 Q15.5 5 17 6.5 M14 24.5 Q15.5 26 17 24.5" stroke="#30c040" stroke-width="0.8" fill="none"/></svg>
<svg style="position:absolute;left:935px;top:71px" width="25" height="25" viewBox="0 0 25 25"><path d="M7 1.5 V23 M18 1.5 V23" stroke="#e01010" stroke-width="3" stroke-linecap="round"/><path d="M1.5 7 H23 M1.5 18 H23" stroke="#00a000" stroke-width="3" stroke-linecap="round"/><circle cx="7" cy="7" r="2.2" fill="#f0f0f0" stroke="#888" stroke-width="0.6"/><circle cx="18" cy="18" r="2.2" fill="#f0f0f0" stroke="#888" stroke-width="0.6"/></svg>
<svg style="position:absolute;left:978px;top:71px" width="26" height="26" viewBox="0 0 24 24"><path d="M12 1.3 L22.7 12 L12 22.7 L1.3 12 Z" fill="#f5a818" stroke="#111" stroke-width="1.5" stroke-linejoin="round"/><path d="M8.5 5.5 L5.5 10 H7.3 V18 H9.7 V10 H11.5 Z" fill="#000"/><path d="M15.5 18.5 L12.5 14 H14.3 V6 H16.7 V14 H18.5 Z" fill="#000"/></svg>
<svg style="position:absolute;left:1020px;top:70px" width="26" height="27" viewBox="0 0 26 27"><ellipse cx="14" cy="25" rx="12" ry="1.5" fill="#000" opacity="0.25"/><path d="M0.8 5.5 L24.5 0.8 V22.5 L0.8 21.5 Z" fill="#f4f4f4" stroke="#111" stroke-width="1.4"/><defs><linearGradient id="gcon" x1="0" y1="0" x2="1" y2="1"><stop offset="0" stop-color="#222"/><stop offset="0.5" stop-color="#4a4a4a"/><stop offset="1" stop-color="#1a1a1a"/></linearGradient></defs><path d="M3.5 7.5 L21 4 V19.5 L3.5 19 Z" fill="url(#gcon)" stroke="#000" stroke-width="0.6"/><path d="M5.5 10 L9.5 12 L5.5 14" fill="none" stroke="#10e030" stroke-width="1.6"/><path d="M9.5 15 H14" stroke="#10e030" stroke-width="1.6"/></svg>
<div style="position:absolute;left:4px;top:180px;width:32px;height:32px;background:#cce4f7;box-sizing:border-box;border:1px solid #3d95f0"></div>
<div style="position:absolute;left:4px;top:282px;width:32px;height:32px;background:#cce4f7;box-sizing:border-box;border:1px solid #3d95f0"></div>
<div style="position:absolute;left:4px;top:359px;width:32px;height:32px;background:#cce4f7;box-sizing:border-box;border:1px solid #3d95f0"></div>
<div style="position:absolute;left:4px;top:402px;width:32px;height:32px;background:#cce4f7;box-sizing:border-box;border:1px solid #3d95f0"></div>
<div style="position:absolute;left:4px;top:479px;width:32px;height:32px;background:#cce4f7;box-sizing:border-box;border:1px solid #3d95f0"></div>
<div style="position:absolute;left:4px;top:701px;width:32px;height:32px;background:#cce4f7;box-sizing:border-box;border:1px solid #3d95f0"></div>
<div style="position:absolute;left:8px;top:353px;width:24px;height:1px;background:#a8a8a8"></div>
<div style="position:absolute;left:8px;top:396px;width:24px;height:1px;background:#a8a8a8"></div>
<div style="position:absolute;left:8px;top:439px;width:24px;height:1px;background:#a8a8a8"></div>
<div style="position:absolute;left:8px;top:550px;width:24px;height:1px;background:#a8a8a8"></div>
<div style="position:absolute;left:8px;top:695px;width:24px;height:1px;background:#a8a8a8"></div>
<div style="position:absolute;left:8px;top:772px;width:24px;height:1px;background:#a8a8a8"></div>
<svg style="position:absolute;left:4px;top:146px" width="32" height="32" viewBox="0 0 32 32"><g stroke="#111" stroke-width="1.1" fill="none" stroke-linecap="round"><path d="M13 4 L14.5 9 M23.5 4 L22 9"/><path d="M24 13 L29 14.5 M24.5 20 L27.5 24.5 M12 13 L9 14"/></g><ellipse cx="18.5" cy="17" rx="7.3" ry="8.6" fill="#080808"/><path d="M12.5 10 Q18.5 5 24.5 10 L24 12 H13Z" fill="#111"/><circle cx="15" cy="7.8" r="1.2" fill="#eee"/><circle cx="22" cy="7.8" r="1.2" fill="#eee"/><circle cx="12.6" cy="18.5" r="7.9" fill="none" stroke="#d83838" stroke-width="2.3"/><path d="M7.8 23 L18.2 12.6" stroke="#d83838" stroke-width="2.3"/><path d="M6 19 A7 7 0 0 1 9 12" stroke="#f08080" stroke-width="0.7" fill="none" opacity="0.6"/></svg>
<svg style="position:absolute;left:4px;top:180px" width="32" height="32" viewBox="0 0 32 32"><circle cx="6.9" cy="6.8" r="1.5" fill="#1e1a18"/><circle cx="6.9" cy="12.9" r="1.5" fill="#1e1a18"/><circle cx="6.9" cy="18.7" r="1.5" fill="#1e1a18"/><circle cx="6.9" cy="24.7" r="1.5" fill="#1e1a18"/><circle cx="13" cy="6.8" r="1.5" fill="#1e1a18"/><circle cx="13" cy="12.9" r="1.5" fill="#1e1a18"/><circle cx="13" cy="18.7" r="1.5" fill="#1e1a18"/><circle cx="13" cy="24.7" r="1.5" fill="#1e1a18"/><circle cx="19" cy="6.8" r="1.5" fill="#1e1a18"/><circle cx="19" cy="12.9" r="1.5" fill="#1e1a18"/><circle cx="19" cy="18.7" r="1.5" fill="#1e1a18"/><circle cx="19" cy="24.7" r="1.5" fill="#1e1a18"/><circle cx="24.9" cy="6.8" r="1.5" fill="#1e1a18"/><circle cx="24.9" cy="12.9" r="1.5" fill="#1e1a18"/><circle cx="24.9" cy="18.7" r="1.5" fill="#1e1a18"/><circle cx="24.9" cy="24.7" r="1.5" fill="#1e1a18"/></svg>
<svg style="position:absolute;left:4px;top:214px" width="32" height="32" viewBox="0 0 32 32"><path d="M5.5 5 V26.5 H26" fill="none" stroke="#111" stroke-width="1.3"/><path d="M5.4 3.5 L3 10 H7.8Z M28 26.5 L21.5 24 V29Z" fill="#111"/><path d="M6 25.5 L25.5 6.5" stroke="#3a2a2a" stroke-width="1.1"/><path d="M12.5 19.5 Q16 22 16.5 26" stroke="#3a2a2a" stroke-width="0.8" fill="none"/><circle cx="25.9" cy="6" r="2.1" fill="#ff0000"/><path d="M12 5.5 V12" stroke="#3a2a2a" stroke-width="2.4"/><path d="M12 8 Q13 5.8 16.7 6.2" stroke="#3a2a2a" stroke-width="2" fill="none"/><ellipse cx="24.5" cy="17.5" rx="3.6" ry="2.9" fill="none" stroke="#3a2a2a" stroke-width="1.3"/><path d="M24.5 13.8 V21.8" stroke="#3a2a2a" stroke-width="1.4"/></svg>
<svg style="position:absolute;left:4px;top:248px" width="32" height="32" viewBox="0 0 32 32"><rect x="9" y="6" width="3" height="2" fill="#1e1e1e"/><rect x="9" y="9.4" width="3" height="8.5" fill="#1e1e1e"/><path d="M16.4 17.9 V9.4 M16.4 11.8 Q17.6 9 20 9 Q22.6 9 22.6 12.3 V17.9" fill="none" stroke="#1e1e1e" stroke-width="3"/><path d="M8 22.3 H26" stroke="#222" stroke-width="1.3"/><path d="M4 22.3 L11 19.7 V24.900000000000002Z M28 22.3 L21 19.7 V24.900000000000002Z" fill="#222"/></svg>
<svg style="position:absolute;left:4px;top:282px" width="32" height="32" viewBox="0 0 32 32"><path d="M5.1 16 V8 M5.1 10.8 Q5.8999999999999995 8 7.699999999999999 8 Q9.55 8 9.55 10.8 V16 M9.55 10.8 Q10.350000000000001 8 12.15 8 Q14.0 8 14.0 10.8 V16 M17.7 16 V8 M17.7 10.8 Q18.5 8 20.3 8 Q22.15 8 22.15 10.8 V16 M22.15 10.8 Q22.95 8 24.75 8 Q26.599999999999998 8 26.599999999999998 10.8 V16" fill="none" stroke="#2e2624" stroke-width="2.6"/><path d="M8 22.3 H26" stroke="#222" stroke-width="1.3"/><path d="M4 22.3 L11 19.7 V24.900000000000002Z M28 22.3 L21 19.7 V24.900000000000002Z" fill="#222"/></svg>
<svg style="position:absolute;left:4px;top:316px" width="32" height="32" viewBox="0 0 32 32"><rect x="4" y="10.8" width="2" height="2" fill="#8a8a8a"/><rect x="18" y="10.8" width="10" height="2" fill="#8a8a8a"/><rect x="11" y="4" width="2" height="2" fill="#8a8a8a"/><rect x="11" y="18" width="2" height="10" fill="#8a8a8a"/><rect x="7" y="10.8" width="10" height="2" fill="#333"/><rect x="11" y="7" width="2" height="10" fill="#333"/><path d="M15.5 14.5 V26.5 L18.3 24 L20.8 28.5 L22.5 27.5 L20.2 23.2 H24.5 Z" fill="#f4f4f4" stroke="#555" stroke-width="1" stroke-linejoin="round"/></svg>
<svg style="position:absolute;left:4px;top:359px" width="32" height="32" viewBox="0 0 32 32"><rect x="3.2" y="3.2" width="25.5" height="25.5" rx="2" fill="#cdcdcd"/><g stroke="#fff" stroke-width="1.7"><path d="M8 7.8 L22.5 9.8 L28 10 M8 7.8 L23.5 20.9 M22.5 9.8 L9.4 23.3"/></g><g fill="#d8f000" stroke="#243000" stroke-width="0.9"><circle cx="8" cy="7.8" r="2.6"/><ellipse cx="22.5" cy="9.8" rx="2.4" ry="2.8"/><circle cx="9.4" cy="23.3" r="2.5"/><ellipse cx="23.5" cy="20.9" rx="2.4" ry="2.7"/></g></svg>
<svg style="position:absolute;left:4px;top:402px" width="32" height="32" viewBox="0 0 32 32"><path d="M8 9.4 H24" stroke="#9a9a9a" stroke-width="2"/><path d="M4.5 9.4 H6.6 V20 L10.8 24.3 H20.9 L25.5 20 V9.4 H27.6" fill="none" stroke="#008000" stroke-width="2.8" stroke-linecap="round" stroke-linejoin="round"/><path d="M11.6 5.6 L20 14.3 M20 5.6 L11.6 14.3" stroke="#e80000" stroke-width="3" stroke-linecap="round"/></svg>
<svg style="position:absolute;left:4px;top:445px" width="32" height="32" viewBox="0 0 32 32"><rect x="3.5" y="3.5" width="25" height="25" fill="#5aa85a" stroke="#108a10" stroke-width="1"/><path d="M11.85 13.3 H20.5 L26.5 26.7" fill="none" stroke="#0a8a0a" stroke-width="6.2" stroke-linejoin="round"/><path d="M11.85 13.3 H20.5 L26.5 26.7" fill="none" stroke="#f4f4f4" stroke-width="4.6" stroke-linejoin="round"/><path d="M11.85 13.3 H20.5 L26.5 26.7" fill="none" stroke="#0a8a0a" stroke-width="3" stroke-linecap="round" stroke-linejoin="round"/><circle cx="11.85" cy="13.3" r="6.8" fill="#0a8a0a"/><circle cx="11.85" cy="13.3" r="5.9" fill="#f4f4f4"/><circle cx="11.85" cy="13.3" r="5" fill="#0a8a0a"/><circle cx="11.85" cy="13.3" r="2" fill="#f4f4f4"/><path d="M22 13 L28.5 26" stroke="#5aa85a" stroke-width="1.5" opacity="0"/></svg>
<svg style="position:absolute;left:4px;top:479px" width="32" height="32" viewBox="0 0 32 32"><path d="M23.7 28.3 H3.6 V3.6 H28.3 V23" fill="none" stroke="#2a8a2a" stroke-width="1.2"/><path d="M11.85 13.3 H20.9 L26.5 26.5" fill="none" stroke="#0a8a0a" stroke-width="3" stroke-linecap="round" stroke-linejoin="round"/><circle cx="11.85" cy="13.3" r="3.5" fill="none" stroke="#0a8a0a" stroke-width="3"/></svg>
<svg style="position:absolute;left:4px;top:513px" width="32" height="32" viewBox="0 0 32 32"><path d="M23.7 28.3 H3.6 V3.6 H28.3 V23" fill="none" stroke="#2a8a2a" stroke-width="1.2"/><path d="M11.85 13.3 H21.5 L28 26.7" fill="none" stroke="#0a8a0a" stroke-width="6.5" stroke-linejoin="round"/><path d="M11.85 13.3 H21.5 L28 26.7" fill="none" stroke="#e1e1e1" stroke-width="4.6" stroke-linejoin="round"/><circle cx="11.85" cy="13.3" r="7.2" fill="#0a8a0a"/><circle cx="11.85" cy="13.3" r="6.1" fill="#e1e1e1"/><path d="M11.85 13.3 H20.9 L26.5 26.5" fill="none" stroke="#0a8a0a" stroke-width="3" stroke-linecap="round" stroke-linejoin="round"/><circle cx="11.85" cy="13.3" r="3.5" fill="none" stroke="#0a8a0a" stroke-width="3"/></svg>
<svg style="position:absolute;left:4px;top:556px" width="32" height="32" viewBox="0 0 32 32"><path d="M15.9 7.1 A8.8 8.8 0 0 0 9.7 22.1 L13.5 18.3 A3.4 3.4 0 0 1 18.3 13.5 L22.1 9.7 A8.8 8.8 0 0 0 15.9 7.1Z" fill="#4a9a4a"/><circle cx="15.9" cy="15.9" r="8.8" fill="none" stroke="#0a8a0a" stroke-width="1.8"/><circle cx="15.9" cy="15.9" r="3.4" fill="#dedede" stroke="#0a8a0a" stroke-width="1.7"/><path d="M4 27.5 L27.5 4.2" stroke="#a8a8a8" stroke-width="1.6" stroke-linecap="round"/></svg>
<svg style="position:absolute;left:4px;top:590px" width="32" height="32" viewBox="0 0 32 32"><path d="M3 3 H7.6 L13.3 8.6 L9.4 13 L3 7.4Z" fill="#00a000"/><path d="M18.7 14.7 L28.9 24.1 V28.9 H24.1 L14.9 19.3Z" fill="#e00000"/><path d="M4 27.5 L27.5 4" stroke="#a8a8a8" stroke-width="1.6" stroke-linecap="round"/><circle cx="15.9" cy="15.9" r="6.2" fill="#bcbcbc" fill-opacity="0.85" stroke="#444" stroke-width="1.5"/><path d="M14.3 18.3 L18.7 14.2 Q19 18 14.3 18.3Z" fill="#a8c000"/><path d="M14.9 19.3 L18.7 14.7 L21 17 L17.5 21Z" fill="#e00000" opacity="0.9"/></svg>
<svg style="position:absolute;left:4px;top:624px" width="32" height="32" viewBox="0 0 32 32"><path d="M10 3 H16.1 V14.9 L10 20.9Z" fill="#dd0000"/><rect x="3" y="16" width="7" height="5.9" fill="#007a00"/><path d="M10 16.5 H28 M10 21.5 H28" stroke="#0a8a0a" stroke-width="1.6" stroke-linecap="round"/><path d="M10.5 22 V28.2 M15.5 17 V28.2" stroke="#dd0000" stroke-width="1.5" stroke-linecap="round"/><path d="M4 27.5 L27.5 4" stroke="#a8a8a8" stroke-width="1.6" stroke-linecap="round"/></svg>
<svg style="position:absolute;left:4px;top:658px" width="32" height="32" viewBox="0 0 32 32"><path d="M5.2 6 L10 16.3 H22.5 L26.7 26.5" fill="none" stroke="#008a00" stroke-width="2.8" stroke-linecap="round" stroke-linejoin="round"/><path d="M20.3 11 H27.7" stroke="#8a8a8a" stroke-width="2.8" stroke-linecap="round"/><path d="M11.6 6 L14.3 11 H20.3" fill="none" stroke="#dd0000" stroke-width="2.8" stroke-linecap="round" stroke-linejoin="round"/><path d="M10 21.5 H17.7 L20.3 26.5" fill="none" stroke="#8a8a8a" stroke-width="2.8" stroke-linecap="round" stroke-linejoin="round"/><path d="M3.6 21.5 H10" stroke="#dd0000" stroke-width="2.8" stroke-linecap="round"/><path d="M4 27.5 L27.5 4" stroke="#a8a8a8" stroke-width="1.6" stroke-linecap="round"/></svg>
<svg style="position:absolute;left:4px;top:701px" width="32" height="32" viewBox="0 0 32 32"><path d="M13.3 3 H28.7 V11.2 H3.4 Z" fill="#00a000" stroke="#222" stroke-width="0.7"/><path d="M8 11.6 H28.7 V16.3 H3.4 Z" fill="#ff0000" stroke="#222" stroke-width="0.7"/><path d="M8 16.7 H28.7 V21.3 H3.4 Z" fill="#0000ff" stroke="#222" stroke-width="0.7"/><path d="M8 21.9 H24.9 L27 26.3 H3.4 Z" fill="#d4a000" stroke="#222" stroke-width="0.7"/><g transform="translate(20.5,14.5) rotate(-45) scale(0.75)"><path d="M-4.5 -7 A7 7 0 0 0 -3 6 V18 Q-3 20.5 0 20.5 Q3 20.5 3 18 V6 A7 7 0 0 0 4.5 -7 V-1.5 L0 1.5 L-4.5 -1.5Z" fill="#e6e6e6" stroke="#777" stroke-width="0.9"/></g></svg>
<svg style="position:absolute;left:4px;top:735px" width="32" height="32" viewBox="0 0 32 32"><path d="M3.6 23.1 H5.5 Q7 23 7 20 V7.5 Q7 5.6 8.7 5.6 H9.5 Q10.4 5.6 10.4 7.5 V21 Q10.4 23.1 12.5 23.1 H13 Q15.1 23.1 15.1 21 V7.5 Q15.1 5.6 17 5.6 Q18.9 5.6 18.9 7.5 V21 Q18.9 23.1 21 23.1 Q23.2 23.1 23.7 21 V7.5 Q23.7 5.6 25.7 5.6 H25.8 Q27.7 5.6 27.7 7.5 V21.7" fill="none" stroke="#e00000" stroke-width="2.6" stroke-linejoin="round"/><g transform="translate(14.5,12.5) rotate(-45) scale(0.95)"><path d="M-4.5 -7 A7 7 0 0 0 -3 6 V18 Q-3 20.5 0 20.5 Q3 20.5 3 18 V6 A7 7 0 0 0 4.5 -7 V-1.5 L0 1.5 L-4.5 -1.5Z" fill="#e6e6e6" stroke="#777" stroke-width="0.9"/></g></svg>
<div style="position:absolute;left:749px;top:505px;width:360px;height:4px;background:rgba(215,215,190,0.93)"></div>
<div style="position:absolute;left:749px;top:509px;width:4px;height:287px;background:rgba(215,215,190,0.93)"></div>
<svg style="position:absolute;left:0;top:0" width="1109" height="796">
<g fill="none" stroke="#62a2a2" stroke-width="3" stroke-linecap="round" stroke-linejoin="round">
<path d="M903.5 750 V737.5 M903.5 742.5 Q905.5 737 910.5 737.5"/>
<path d="M911 751.2 H924"/>
<ellipse cx="932" cy="740.5" rx="5.3" ry="8.6"/>
<path d="M952.5 733.5 Q950 731.5 947.5 731.8 Q942.5 732.5 942.3 741 Q942 749.5 947.8 749.5 Q953.3 749.5 953.3 744.5 Q953.3 739.5 948 739.5 Q943.5 739.5 942.3 743.5"/>
<ellipse cx="964" cy="740.5" rx="5.3" ry="8.6"/>
<path d="M974 732.5 H985 L979 739.8 Q985.5 739.8 985.5 744.7 Q985.5 749.5 979.5 749.5 Q975.5 749.5 973.8 747.5"/>
</g>
<g>
<rect x="913.5" y="753.5" width="24.5" height="37" rx="2" fill="#a06ca0" stroke="#80e080" stroke-width="1"/>
<rect x="950.5" y="753.5" width="24.5" height="37" rx="2" fill="#a06ca0" stroke="#80e080" stroke-width="1"/>
<rect x="918" y="758" width="15" height="28" fill="#8ccc84"/>
<rect x="955" y="758" width="15" height="28" fill="#8ccc84"/>
<rect x="924" y="762" width="40.5" height="19.5" fill="none" stroke="#78b8c8" stroke-width="2.6" opacity="0.85"/>
<path d="M939 772.5 H949" stroke="#7a6ab0" stroke-width="1"/>
<path d="M921 770 Q919 772 920.5 774 M926 769 L930 773" stroke="#fff" stroke-width="0.9" fill="none"/>
<path d="M958 772.5 H967 M967 769 V776 M960 772 V775" stroke="#fff" stroke-width="0.9" fill="none"/>
<path d="M920 797 Q921.5 793 928 793 Q933 793 935 797 M938.5 797 L940.5 794 M944 797 V794.5 M950.5 797 L953 794 M956 797 V794.5 M961.5 797 Q963.5 793.5 968 794.5 M970 797 L971 795" stroke="#a4a4a4" stroke-width="2.8" fill="none" stroke-linecap="round"/>
<rect x="944" y="741" width="1" height="55" fill="#0000ff"/>
</g></svg>
<div style="position:absolute;left:688px;top:66px;width:4px;height:244px;background:linear-gradient(90deg,rgba(0,0,0,0.32),rgba(0,0,0,0))"></div>
<div style="position:absolute;left:410px;top:307px;width:278px;height:3px;background:linear-gradient(rgba(0,0,0,0.18),rgba(0,0,0,0))"></div>
<div style="position:absolute;left:407px;top:63px;width:281px;height:244px;background:#f2f2f2;box-sizing:border-box;border:1px solid #cccccc"></div>
<div style="position:absolute;left:408px;top:64px;width:40px;height:242px;background:#f0f0f0"></div>
<div style="position:absolute;left:448px;top:101px;width:236px;height:1px;background:#d7d7d7"></div>
<div style="position:absolute;left:448px;top:268px;width:236px;height:1px;background:#d7d7d7"></div>
<div style="position:absolute;left:410px;top:272px;width:275px;height:32px;background:#91c9f7"></div>
<div class="t" style="left:451.6px;top:73.8px;font-size:15px;color:#000;letter-spacing:-0.240px;">Update PCB from Schematics</div>
<div class="t" style="left:451.6px;top:113.3px;font-size:15px;color:#000;letter-spacing:-0.064px;">Read Netlist</div>
<div class="t" style="left:451.6px;top:145.3px;font-size:15px;color:#000;letter-spacing:-0.531px;">Set Layer Pair</div>
<div class="t" style="left:451.6px;top:177.3px;font-size:15px;color:#000;letter-spacing:-1.350px;">DRC</div>
<div class="t" style="left:451.6px;top:209.6px;font-size:15px;color:#000;letter-spacing:-0.488px;">FreeRoute</div>
<div class="t" style="left:451.6px;top:241.3px;font-size:15px;color:#000;letter-spacing:-0.050px;">Scripting Console</div>
<div class="t" style="left:451.6px;top:280.3px;font-size:15px;color:#000;letter-spacing:-0.273px;">External Plugins</div>
<svg style="position:absolute;left:410px;top:66px" width="32" height="32" viewBox="0 0 32 32"><path d="M3.2 5.2 H6.2 V21.7 H3.2 Z" fill="#fff" stroke="#555" stroke-width="0.9"/><path d="M6.2 3.2 Q11.5 4 16 9.2 V24.5 Q11 20 6.2 21.7 Z" fill="#fafafa" stroke="#444" stroke-width="0.9"/><path d="M16 9.2 Q21 4.5 27.3 3.3 L28.7 4.8 V21 Q22 21.5 16 24.5 Z" fill="#f8f8f8" stroke="#444" stroke-width="0.9"/><path d="M27.3 3.3 V20.5" stroke="#999" stroke-width="1.2"/><g stroke="#c8c8c8" stroke-width="0.6"><path d="M8 8 Q11 8.5 14 11 M8 11 Q11 11.5 14 14 M8 14 Q11 14.5 14 17 M18 11 Q21 8.5 25 8 M18 14 Q21 11.5 25 11 M18 17 Q21 14.5 25 14 M18 20 Q21 17.5 25 17"/></g><path d="M14.5 24.3 L16 25.8 L17.5 24.3Z" fill="#222"/><path d="M8 24 L19 12.6" stroke="#3a3a3a" stroke-width="4.3"/><path d="M8.5 22.5 L18.5 12" stroke="#6a6a6a" stroke-width="0.9"/><path d="M5.2 27.5 L6 22.3 Q8 23 9.9 25.3 Z" fill="#f2ec9a" stroke="#b8a840" stroke-width="0.8"/><path d="M5.2 27.5 L5.6 25.3 L7.2 26.6Z" fill="#111"/><path d="M16.8 11.2 L19.5 14" stroke="#c8c8c8" stroke-width="2.2"/><circle cx="19.9" cy="12.2" r="2.7" fill="#e8a2de" stroke="#c080b8" stroke-width="0.5"/></svg>
<svg style="position:absolute;left:413px;top:108px" width="26" height="26" viewBox="0 0 26 26"><path d="M1 0.5 H19 L25.5 7 V25.5 H1 Z" fill="#ebebeb" stroke="#bbb" stroke-width="0.8"/><path d="M4 3 L20 12" stroke="#c02020" stroke-width="1"/><path d="M7 12 L15 3" stroke="#209020" stroke-width="1"/><rect x="0.5" y="15" width="25" height="10.5" fill="#2a7a2a"/><text x="13" y="24.3" font-family="Liberation Serif" font-weight="bold" font-size="11.5" fill="#fff" stroke="#fff" stroke-width="0.25" text-anchor="middle" letter-spacing="0.1">NET</text></svg>
<svg style="position:absolute;left:414px;top:142px" width="25" height="21" viewBox="0 0 25 21"><path d="M1 1.5 H17 L23 8 H7 Z" fill="#ff0000" stroke="#111" stroke-width="1.2" stroke-linejoin="round"/><path d="M1 12 H17 L23 18.5 H7 Z" fill="#00ee00" stroke="#111" stroke-width="1.2" stroke-linejoin="round"/></svg>
<svg style="position:absolute;left:410px;top:169px" width="32" height="32" viewBox="0 0 32 32"><g stroke="#444" stroke-width="0.9" fill="none"><path d="M8.5 4.5 L10.5 9.5 M19.5 4.5 L17.5 9.5 M4.5 15.5 L8 14 M5 24.5 L7.5 21.5 M23 24.5 L20.5 21.5"/></g><path d="M9 5.5 L12 8 M19 5.5 L16 8" stroke="#d08080" stroke-width="0.6"/><ellipse cx="14" cy="19" rx="7" ry="7.6" fill="#dd1010"/><ellipse cx="12" cy="16" rx="3" ry="2.5" fill="#ff5050" opacity="0.5"/><path d="M8.5 12.5 Q9 8.2 14 8.2 Q19 8.2 19.5 12.5 Q14 10.5 8.5 12.5Z" fill="#111"/><ellipse cx="11.3" cy="9.6" rx="1.3" ry="0.9" fill="#f0c800"/><ellipse cx="16.7" cy="9.6" rx="1.3" ry="0.9" fill="#f0c800"/><g fill="#111"><circle cx="9.2" cy="15" r="1.2"/><circle cx="11.5" cy="18.6" r="1.5"/><circle cx="16.5" cy="18.8" r="1.4"/><circle cx="10" cy="22.8" r="1.1"/><circle cx="14.5" cy="24.4" r="1"/><circle cx="18.2" cy="22.5" r="1.1"/></g><path d="M12.5 11 L18.6 17.8 L26.6 8.6" fill="none" stroke="#10a030" stroke-width="3.3"/></svg>
<svg style="position:absolute;left:414px;top:205px" width="26" height="26" viewBox="0 0 24 24"><path d="M12 1.3 L22.7 12 L12 22.7 L1.3 12 Z" fill="#f5a818" stroke="#111" stroke-width="1.5" stroke-linejoin="round"/><path d="M8.5 5.5 L5.5 10 H7.3 V18 H9.7 V10 H11.5 Z" fill="#000"/><path d="M15.5 18.5 L12.5 14 H14.3 V6 H16.7 V14 H18.5 Z" fill="#000"/></svg>
<svg style="position:absolute;left:413px;top:236px" width="26" height="27" viewBox="0 0 26 27"><ellipse cx="14" cy="25" rx="12" ry="1.5" fill="#000" opacity="0.25"/><path d="M0.8 5.5 L24.5 0.8 V22.5 L0.8 21.5 Z" fill="#f4f4f4" stroke="#111" stroke-width="1.4"/><defs><linearGradient id="gcon" x1="0" y1="0" x2="1" y2="1"><stop offset="0" stop-color="#222"/><stop offset="0.5" stop-color="#4a4a4a"/><stop offset="1" stop-color="#1a1a1a"/></linearGradient></defs><path d="M3.5 7.5 L21 4 V19.5 L3.5 19 Z" fill="url(#gcon)" stroke="#000" stroke-width="0.6"/><path d="M5.5 10 L9.5 12 L5.5 14" fill="none" stroke="#10e030" stroke-width="1.6"/><path d="M9.5 15 H14" stroke="#10e030" stroke-width="1.6"/></svg>
<svg style="position:absolute;left:410px;top:271px" width="32" height="32" viewBox="0 0 32 32"><ellipse cx="18" cy="27.7" rx="9.5" ry="1.3" fill="#000" opacity="0.16"/><path d="M15.2 15.5 Q17 11 19.5 8.5" stroke="#777" stroke-width="3.6" fill="none"/><path d="M15.2 15.5 Q17 11 19.5 8.5" stroke="#f0f0f0" stroke-width="2.2" fill="none"/><path d="M6 27.8 L15.6 15.2" stroke="#8a6a00" stroke-width="4.8" stroke-linecap="round"/><path d="M6 27.8 L15.6 15.2" stroke="#f2c418" stroke-width="3.4" stroke-linecap="round"/><path d="M11.3 5.8 Q15.5 3.6 20.5 5.2 Q25 7 28.9 10.6 L27.8 12.4 Q24 9.4 21 9.4 Q19.5 9.5 18.5 11 L17.5 9.5 Q18.5 7.5 17.5 6.6 Q14.5 5.4 11.5 7 Z" fill="#e8e8e8" stroke="#5a5a5a" stroke-width="0.9" stroke-linejoin="round"/><path d="M11.5 6.2 Q15 4.5 18.5 5.5" stroke="#444" stroke-width="1.4" fill="none"/><path d="M21.5 9.5 Q25 9.6 28 12" stroke="#555" stroke-width="1.3" fill="none"/></svg>
<svg style="position:absolute;left:668px;top:282px" width="10" height="12"><path d="M2.5 1.5 L7 6 L2.5 10.5" fill="none" stroke="#333" stroke-width="1.1"/></svg>
<div style="position:absolute;left:1107px;top:272px;width:2px;height:172px;background:rgba(0,0,0,0.1)"></div>
<div style="position:absolute;left:682px;top:269px;width:427px;height:173px;background:#f2f2f2;box-sizing:border-box;border:1px solid #cccccc;border-right:none"></div>
<div style="position:absolute;left:683px;top:270px;width:40px;height:171px;background:#f0f0f0"></div>
<div style="position:absolute;left:723px;top:307px;width:384px;height:1px;background:#d7d7d7"></div>
<div style="position:absolute;left:685px;top:343px;width:422px;height:32px;background:#91c9f7"></div>
<div class="t" style="left:726.4px;top:280.8px;font-size:15px;color:#000;letter-spacing:-0.371px;">Refresh Plugins</div>
<div class="t" style="left:727.4px;top:319.3px;font-size:15px;color:#000;letter-spacing:-0.242px;">Annular check</div>
<div class="t" style="left:726.4px;top:351.3px;font-size:15px;color:#000;letter-spacing:-0.130px;">Move Selected drawings to chosen Layer</div>
<div class="t" style="left:727.4px;top:383.3px;font-size:15px;color:#000;letter-spacing:-0.028px;">export technical layers of pcb to DXF (saved board)</div>
<div class="t" style="left:727.4px;top:415.3px;font-size:15px;color:#000;letter-spacing:-0.271px;">Add date on PCB</div>
<svg style="position:absolute;left:684px;top:272px" width="32" height="32" viewBox="0 0 32 32"><defs><linearGradient id="grf1" x1="0" y1="0" x2="1" y2="0"><stop offset="0" stop-color="#3a70c0"/><stop offset="0.5" stop-color="#dce8f4"/><stop offset="1" stop-color="#5a90d0"/></linearGradient><linearGradient id="grf2" x1="0" y1="0" x2="1" y2="0"><stop offset="0" stop-color="#6a9ad8"/><stop offset="0.5" stop-color="#e0ecf6"/><stop offset="1" stop-color="#3a6cc0"/></linearGradient></defs><ellipse cx="16.5" cy="26.5" rx="10" ry="1.3" fill="#000" opacity="0.12"/><path d="M6 13.2 Q7.5 5 16 4.8 Q21.5 4.8 24.5 8.3 L27.6 5 V15.3 H18.8 L21.7 12.5 Q19.5 9.5 15.5 9.5 Q10.5 9.6 9 13.2 Z" fill="url(#grf1)" stroke="#3a64a8" stroke-width="0.8"/><path d="M27.6 17.5 Q26 25 17 25.3 Q11.5 25.3 8.5 22 L6 25.5 V15.3 H14.8 L12.2 18.3 Q14.5 20.8 17.5 20.8 Q22.5 20.5 24.2 17.5 Z" fill="url(#grf2)" stroke="#3a64a8" stroke-width="0.8"/></svg>
<svg style="position:absolute;left:684px;top:310px" width="32" height="32" viewBox="0 0 32 32"><ellipse cx="18" cy="27.7" rx="9.5" ry="1.3" fill="#000" opacity="0.16"/><path d="M15.2 15.5 Q17 11 19.5 8.5" stroke="#777" stroke-width="3.6" fill="none"/><path d="M15.2 15.5 Q17 11 19.5 8.5" stroke="#f0f0f0" stroke-width="2.2" fill="none"/><path d="M6 27.8 L15.6 15.2" stroke="#8a6a00" stroke-width="4.8" stroke-linecap="round"/><path d="M6 27.8 L15.6 15.2" stroke="#f2c418" stroke-width="3.4" stroke-linecap="round"/><path d="M11.3 5.8 Q15.5 3.6 20.5 5.2 Q25 7 28.9 10.6 L27.8 12.4 Q24 9.4 21 9.4 Q19.5 9.5 18.5 11 L17.5 9.5 Q18.5 7.5 17.5 6.6 Q14.5 5.4 11.5 7 Z" fill="#e8e8e8" stroke="#5a5a5a" stroke-width="0.9" stroke-linejoin="round"/><path d="M11.5 6.2 Q15 4.5 18.5 5.5" stroke="#444" stroke-width="1.4" fill="none"/><path d="M21.5 9.5 Q25 9.6 28 12" stroke="#555" stroke-width="1.3" fill="none"/></svg>
<svg style="position:absolute;left:684px;top:342px" width="32" height="32" viewBox="0 0 32 32"><ellipse cx="18" cy="27.7" rx="9.5" ry="1.3" fill="#000" opacity="0.16"/><path d="M15.2 15.5 Q17 11 19.5 8.5" stroke="#777" stroke-width="3.6" fill="none"/><path d="M15.2 15.5 Q17 11 19.5 8.5" stroke="#f0f0f0" stroke-width="2.2" fill="none"/><path d="M6 27.8 L15.6 15.2" stroke="#8a6a00" stroke-width="4.8" stroke-linecap="round"/><path d="M6 27.8 L15.6 15.2" stroke="#f2c418" stroke-width="3.4" stroke-linecap="round"/><path d="M11.3 5.8 Q15.5 3.6 20.5 5.2 Q25 7 28.9 10.6 L27.8 12.4 Q24 9.4 21 9.4 Q19.5 9.5 18.5 11 L17.5 9.5 Q18.5 7.5 17.5 6.6 Q14.5 5.4 11.5 7 Z" fill="#e8e8e8" stroke="#5a5a5a" stroke-width="0.9" stroke-linejoin="round"/><path d="M11.5 6.2 Q15 4.5 18.5 5.5" stroke="#444" stroke-width="1.4" fill="none"/><path d="M21.5 9.5 Q25 9.6 28 12" stroke="#555" stroke-width="1.3" fill="none"/></svg>
<svg style="position:absolute;left:684px;top:374px" width="32" height="32" viewBox="0 0 32 32"><ellipse cx="18" cy="27.7" rx="9.5" ry="1.3" fill="#000" opacity="0.16"/><path d="M15.2 15.5 Q17 11 19.5 8.5" stroke="#777" stroke-width="3.6" fill="none"/><path d="M15.2 15.5 Q17 11 19.5 8.5" stroke="#f0f0f0" stroke-width="2.2" fill="none"/><path d="M6 27.8 L15.6 15.2" stroke="#8a6a00" stroke-width="4.8" stroke-linecap="round"/><path d="M6 27.8 L15.6 15.2" stroke="#f2c418" stroke-width="3.4" stroke-linecap="round"/><path d="M11.3 5.8 Q15.5 3.6 20.5 5.2 Q25 7 28.9 10.6 L27.8 12.4 Q24 9.4 21 9.4 Q19.5 9.5 18.5 11 L17.5 9.5 Q18.5 7.5 17.5 6.6 Q14.5 5.4 11.5 7 Z" fill="#e8e8e8" stroke="#5a5a5a" stroke-width="0.9" stroke-linejoin="round"/><path d="M11.5 6.2 Q15 4.5 18.5 5.5" stroke="#444" stroke-width="1.4" fill="none"/><path d="M21.5 9.5 Q25 9.6 28 12" stroke="#555" stroke-width="1.3" fill="none"/></svg>
<svg style="position:absolute;left:684px;top:406px" width="32" height="32" viewBox="0 0 32 32"><ellipse cx="18" cy="27.7" rx="9.5" ry="1.3" fill="#000" opacity="0.16"/><path d="M15.2 15.5 Q17 11 19.5 8.5" stroke="#777" stroke-width="3.6" fill="none"/><path d="M15.2 15.5 Q17 11 19.5 8.5" stroke="#f0f0f0" stroke-width="2.2" fill="none"/><path d="M6 27.8 L15.6 15.2" stroke="#8a6a00" stroke-width="4.8" stroke-linecap="round"/><path d="M6 27.8 L15.6 15.2" stroke="#f2c418" stroke-width="3.4" stroke-linecap="round"/><path d="M11.3 5.8 Q15.5 3.6 20.5 5.2 Q25 7 28.9 10.6 L27.8 12.4 Q24 9.4 21 9.4 Q19.5 9.5 18.5 11 L17.5 9.5 Q18.5 7.5 17.5 6.6 Q14.5 5.4 11.5 7 Z" fill="#e8e8e8" stroke="#5a5a5a" stroke-width="0.9" stroke-linejoin="round"/><path d="M11.5 6.2 Q15 4.5 18.5 5.5" stroke="#444" stroke-width="1.4" fill="none"/><path d="M21.5 9.5 Q25 9.6 28 12" stroke="#555" stroke-width="1.3" fill="none"/></svg>
<div style="position:absolute;left:401px;top:440px;width:120px;height:97px;background:#f0f0f0;box-sizing:border-box;border:1px solid #1883d7"></div>
<div style="position:absolute;left:402px;top:441px;width:118px;height:31px;background:#fff"></div>
<div class="t" style="left:429.6px;top:447.8px;font-size:15px;color:#000;letter-spacing:-0.367px;">Move...</div>
<svg style="position:absolute;left:402px;top:442px" width="28" height="28" viewBox="0 0 28 28"><path d="M5.3 6.3 L16.7 7.4 L20.6 18.1 L5.3 21.3" fill="none" stroke="#2a2ad8" stroke-width="1.7"/><g fill="#30c040" stroke="#333" stroke-width="0.5"><circle cx="5.3" cy="6.3" r="2.1"/><circle cx="16.7" cy="7.4" r="2.1"/><circle cx="20.6" cy="18.1" r="2.1"/><circle cx="5.3" cy="21.3" r="2.1"/></g></svg>
<svg style="position:absolute;left:492px;top:449px" width="14" height="14"><path d="M1 1 L13 13 M13 1 L1 13" stroke="#111" stroke-width="1.1"/></svg>
<div class="t" style="left:406.7px;top:478.6px;font-size:15px;color:#000;letter-spacing:-0.069px;">Move to Layer:</div>
<div style="position:absolute;left:407px;top:503px;width:108px;height:28px;background:#fff;box-sizing:border-box;border:1px solid #0078d7"></div>
<div style="position:absolute;left:414px;top:506px;width:69px;height:20px;background:#3399ff"></div>
<div class="t" style="left:414.0px;top:507.8px;font-size:15px;color:#fff;letter-spacing:-0.713px;">Edge_Cuts</div>
<div style="position:absolute;left:494px;top:504px;width:20px;height:26px;background:#cce4f7;box-sizing:border-box;border-left:1px solid #569de5"></div>
<svg style="position:absolute;left:498px;top:513px" width="12" height="8"><path d="M1 1.5 L5.5 6 L10 1.5" fill="none" stroke="#333" stroke-width="1.1"/></svg>
<div style="position:absolute;left:407px;top:530px;width:108px;height:243px;background:#fff;box-sizing:border-box;border:1px solid #0078d7"></div>
<div style="position:absolute;left:408px;top:531px;width:106px;height:21px;background:#3399ff"></div>
<div class="t" style="left:409.8px;top:533.9px;font-size:15px;color:#fff;letter-spacing:-0.750px;">Edge_Cuts</div>
<div class="t" style="left:409.8px;top:553.9px;font-size:15px;color:#000;letter-spacing:-0.925px;">Eco1_User</div>
<div class="t" style="left:409.8px;top:573.9px;font-size:15px;color:#000;letter-spacing:-0.925px;">Eco2_User</div>
<div class="t" style="left:409.8px;top:593.9px;font-size:15px;color:#000;letter-spacing:-0.800px;">Dwgs_User</div>
<div class="t" style="left:410.8px;top:613.9px;font-size:15px;color:#000;letter-spacing:-0.963px;">Cmts_User</div>
<div class="t" style="left:409.8px;top:633.9px;font-size:15px;color:#000;letter-spacing:0.360px;">Margin</div>
<div class="t" style="left:409.8px;top:653.9px;font-size:15px;color:#000;letter-spacing:-1.117px;">F_CrtYd</div>
<div class="t" style="left:409.8px;top:673.9px;font-size:15px;color:#000;letter-spacing:-0.967px;">B_CrtYd</div>
<div class="t" style="left:409.8px;top:693.9px;font-size:15px;color:#000;letter-spacing:-1.550px;">F_Fab</div>
<div class="t" style="left:409.8px;top:713.9px;font-size:15px;color:#000;letter-spacing:-1.325px;">B_Fab</div>
<div class="t" style="left:409.8px;top:733.9px;font-size:15px;color:#000;letter-spacing:-1.167px;">F_SilkS</div>
<div class="t" style="left:409.8px;top:753.9px;font-size:15px;color:#000;letter-spacing:-1.017px;">B_SilkS</div>
</body></html>
